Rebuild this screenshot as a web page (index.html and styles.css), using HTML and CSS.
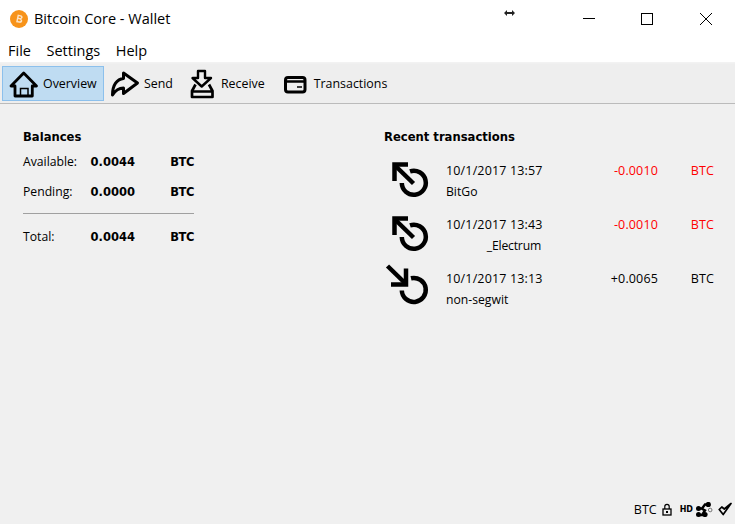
FILE: index.html
```html
<!DOCTYPE html>
<html>
<head>
  <link rel="stylesheet" href="styles.css">
</head>
<body>
  <div class="window">
    <div class="titlebar">
      <svg class="app-icon" width="18" height="18" viewBox="0 0 18 18">
        <circle cx="9" cy="9" r="9" fill="#f7931a"/>
        <path d="M6.800 4.900h3.100c1.500 0 2.300.8 2.300 1.900 0 .8-.5 1.400-1.200 1.700 1 .2 1.600 1 1.600 2 0 1.300-1 2.200-2.600 2.200H6.800zM8.300 6.200v1.700h1.300c.6 0 1-.3 1-.9s-.4-.8-1-.8zM8.300 9.200v2h1.600c.7 0 1.100-.4 1.100-1s-.4-1-1.100-1z" fill="#fde3c4" fill-rule="evenodd" transform="rotate(12 9 9)"/>
      </svg>
      <span class="title">Bitcoin Core - Wallet</span>
      <div class="win-buttons">
        <svg width="58" height="36" viewBox="0 0 58 36"><path d="M22 17.500h12" stroke="#000" fill="none"/></svg>
        <svg width="58" height="36" viewBox="0 0 58 36"><rect x="22.500" y="12.500" width="11" height="11" stroke="#000" fill="none"/></svg>
        <svg width="58" height="36" viewBox="0 0 58 36"><path d="M23 12l12 12M35 12L23 24" stroke="#000" fill="none"/></svg>
      </div>
    </div>

    <div class="menubar">
      <span>File</span>
      <span>Settings</span>
      <span>Help</span>
    </div>

    <div class="toolbar">
      <div class="tool active">
        <svg width="32" height="32" viewBox="0 0 32 32"><path d="M7 18H3L15.700 5 28.500 18h-4.200v10H7z" fill="none" stroke="#000" stroke-width="2.800" stroke-linejoin="round"/><path d="M12.500 28v-7.500h7.500V28" fill="none" stroke="#000" stroke-width="1.500"/></svg>
        <span>Overview</span>
      </div>
      <div class="tool send">
        <svg width="32" height="32" viewBox="0 0 32 32"><path d="M14.500 5l14 10-14 10.500V20C10 20 6 23 3.500 27c0-10 4.500-16 11-16.500z" fill="none" stroke="#000" stroke-width="3" stroke-linejoin="round"/></svg>
        <span>Send</span>
      </div>
      <div class="tool">
        <svg width="32" height="32" viewBox="0 0 32 32"><path d="M12 3h7v7h6L15.700 18.500 6.500 10H12z" fill="none" stroke="#000" stroke-width="2.400" stroke-linejoin="round"/><path d="M9.500 16.500L6 23v6h20.500v-6l-3.500-6.500M6 23.500l9.700 0 10.800 0" fill="none" stroke="#000" stroke-width="2.700" stroke-linejoin="round"/></svg>
        <span>Receive</span>
      </div>
      <div class="tool">
        <svg width="32" height="32" viewBox="0 0 32 32"><rect x="6.500" y="9.500" width="19.500" height="14.500" rx="2.500" fill="none" stroke="#000" stroke-width="3"/><path d="M6 13.500h20" stroke="#000" stroke-width="2.500"/><path d="M18 19h5" stroke="#000" stroke-width="1.500"/></svg>
        <span>Transactions</span>
      </div>
    </div>

    <div class="content">
      <div class="balances">
        <h2>Balances</h2>
        <div class="bal-row"><span class="bal-label">Available:</span><b class="bal-amount">0.0044</b><b class="bal-unit">BTC</b></div>
        <div class="bal-row"><span class="bal-label">Pending:</span><b class="bal-amount">0.0000</b><b class="bal-unit">BTC</b></div>
        <hr>
        <div class="bal-row"><span class="bal-label">Total:</span><b class="bal-amount">0.0044</b><b class="bal-unit">BTC</b></div>
      </div>

      <div class="recent">
        <h2>Recent transactions</h2>
        <div class="tx">
          <svg width="48" height="44" viewBox="0 0 48 44"><use href="#tx-out"/></svg>
          <div class="tx-info">
            <div class="tx-top"><span class="tx-date">10/1/2017 13:57</span><span class="tx-amount neg">-0.0010</span><span class="tx-unit neg">BTC</span></div>
            <div class="tx-label">BitGo</div>
          </div>
        </div>
        <div class="tx">
          <svg width="48" height="44" viewBox="0 0 48 44"><use href="#tx-out"/></svg>
          <div class="tx-info">
            <div class="tx-top"><span class="tx-date">10/1/2017 13:43</span><span class="tx-amount neg">-0.0010</span><span class="tx-unit neg">BTC</span></div>
            <div class="tx-label electrum">_Electrum</div>
          </div>
        </div>
        <div class="tx">
          <svg width="48" height="44" viewBox="0 0 48 44"><use href="#tx-in"/></svg>
          <div class="tx-info">
            <div class="tx-top"><span class="tx-date">10/1/2017 13:13</span><span class="tx-amount">+0.0065</span><span class="tx-unit">BTC</span></div>
            <div class="tx-label">non-segwit</div>
          </div>
        </div>
      </div>
    </div>

    <div class="statusbar">
      <span class="status-unit">BTC</span>
      <svg class="status-lock" width="10" height="13" viewBox="0 0 10 13"><path d="M2.800 6V3.500a2.200 2.200 0 0 1 4.400 0V6" fill="none" stroke="#000" stroke-width="1.200"/><rect x="1" y="6" width="8" height="6" fill="none" stroke="#000" stroke-width="1.300"/><rect x="4" y="8" width="2" height="2"/></svg>
      <b class="status-hd">HD</b>
      <svg width="17" height="15" viewBox="0 0 17 15"><path d="M2.500 6.500h3.500L9 2.500h3M2.500 13h3.500L9 8.500 5.500 6.500M6 13h3" fill="none" stroke="#000" stroke-width="2.400"/><circle cx="2.500" cy="6.500" r="2.500"/><circle cx="2.500" cy="12.500" r="2.500"/><circle cx="12.300" cy="2.500" r="2.600"/><circle cx="9" cy="12.500" r="2.600"/><circle cx="14.200" cy="8" r="1.800" fill="#f0f0f0" stroke="#555" stroke-width=".8"/></svg>
      <svg width="14" height="14" viewBox="0 0 14 14"><path d="M1.200 7.500l4 5L13 1.500 6.300 7 3.800 5z" fill="none" stroke="#000" stroke-width="1.700" stroke-linejoin="round"/></svg>
    </div>

    <svg class="cursor" width="11" height="6" viewBox="0 0 11 6"><path d="M0 3L3 0v2h5V0l3 3-3 3V4H3v2z" fill="#222"/></svg>
  </div>

  <svg class="defs" width="0" height="0">
    <defs>
      <g id="tx-out" fill="none" stroke="#000" stroke-width="4.500">
        <path d="M26 14.400A12 12 0 1 1 17.800 26"/>
        <path d="M11 8.500L29.500 26.500"/>
        <path d="M10.500 24V7.500H24"/>
      </g>
      <g id="tx-in" fill="none" stroke="#000" stroke-width="4.500">
        <path d="M27 13.300A12 12 0 1 1 17.800 25.500"/>
        <path d="M3.500 1L22 19"/>
        <path d="M22 3.500V19.500H7"/>
      </g>
    </defs>
  </svg>
</body>
</html>
```

FILE: styles.css
```css
* {
  box-sizing: border-box;
}

html, body {
  margin: 0;
  height: 100%;
}

body {
  font-family: "Open Sans", "Noto Sans", sans-serif;
  font-size: 12.200px;
  color: #000;
  background: #f0f0f0;
  overflow: hidden;
}

.window {
  position: relative;
  height: 524px;
  display: flex;
  flex-direction: column;
}

.defs {
  position: absolute;
}

.cursor {
  position: absolute;
  left: 504px;
  top: 10px;
}

.titlebar {
  height: 37px;
  background: #fff;
  display: flex;
  align-items: center;
  padding-left: 10px;
}

.title {
  margin-left: 6px;
  font-size: 14.500px;
  padding-bottom: 1px;
}

.win-buttons {
  margin-left: auto;
  display: flex;
}

.menubar {
  height: 26px;
  background: #fff;
  border-bottom: 1px solid #f2f2f2;
  display: flex;
  gap: 15.500px;
  padding-left: 8px;
  font-size: 14.500px;
  line-height: 27px;
}

.toolbar {
  height: 40px;
  margin-top: 1px;
  display: flex;
  align-items: center;
  gap: 3px;
  padding-left: 2px;
  background: #eee;
  border-bottom: 1px solid #bbb;
  font-size: 12.400px;
}

.tool {
  height: 35px;
  display: flex;
  align-items: center;
  padding: 0 4px 0 5px;
  border: 1px solid transparent;
  gap: 3px;
}

.tool.active {
  width: 102px;
  margin-right: -4px;
  background: #bfdcf2;
  border-color: #8cc0ec;
}

.tool.send {
  margin-right: -1px;
}

.content {
  flex: 1;
  display: flex;
  padding: 24px 21px 0 23px;
}

h2 {
  margin: 0;
  font-family: "DejaVu Sans", sans-serif;
  font-size: 11.600px;
  font-weight: bold;
  line-height: 18px;
}

.balances {
  width: 171px;
}

.balances h2 {
  margin-bottom: 7px;
}

.bal-row {
  display: flex;
  height: 18px;
  line-height: 18px;
  margin-bottom: 12px;
}

.bal-row b {
  font-family: "DejaVu Sans", sans-serif;
  font-size: 11.500px;
}

.bal-label {
  width: 68px;
}

.bal-amount {
  width: 80px;
}

.bal-unit {
  margin-left: auto;
  letter-spacing: -.4px;
}

hr {
  border: 0;
  border-top: 1px solid #a0a0a0;
  margin: 0 0 14px;
}

.recent {
  margin-left: 190px;
  flex: 1;
}

.recent h2 {
  margin-bottom: 4px;
}

.tx {
  display: flex;
  height: 54px;
  align-items: flex-start;
}

.tx svg {
  flex: none;
  margin-top: 7px;
  margin-right: 14px;
  overflow: visible;
}

.tx-info {
  flex: 1;
  padding-top: 12px;
}

.tx-top {
  display: flex;
  height: 18px;
  line-height: 18px;
  font-size: 12.500px;
  letter-spacing: .15px;
}

.tx-date {
  width: 132px;
}

.tx-amount {
  width: 80px;
  text-align: right;
}

.tx-unit {
  margin-left: auto;
}

.neg {
  color: #f00;
}

.tx-label {
  line-height: 18px;
  margin-top: 3px;
  width: 95px;
}

.tx-label.electrum {
  text-align: right;
  letter-spacing: -.2px;
}

.statusbar {
  height: 26px;
  display: flex;
  align-items: center;
  justify-content: flex-end;
  gap: 5px;
  padding-right: 3px;
  padding-bottom: 4px;
}

.status-unit {
  font-size: 12.500px;
}

.status-lock {
  margin-right: 3px;
}

.status-hd {
  font-family: "DejaVu Sans", sans-serif;
  font-size: 8px;
  margin-right: -2px;
}
```
